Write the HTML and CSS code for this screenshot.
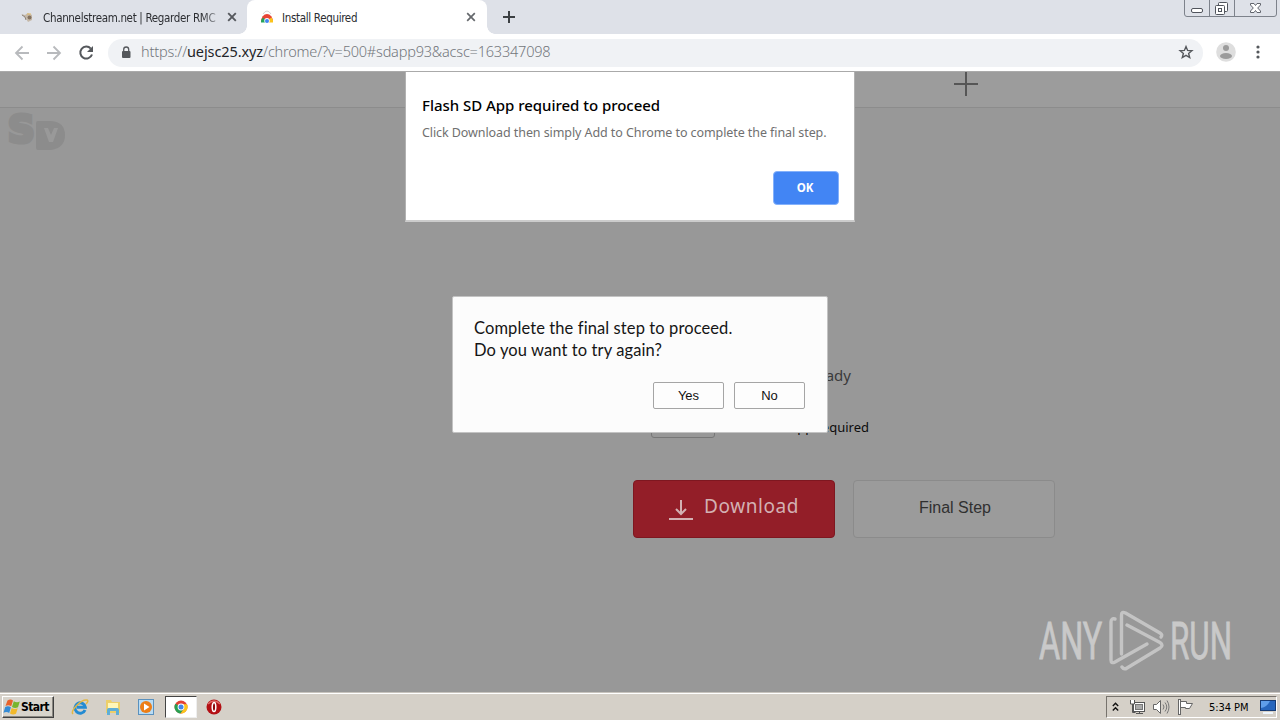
FILE: index.html
```html
<!DOCTYPE html>
<html lang="en">
<head>
<meta charset="utf-8">
<title>Install Required</title>
<link rel="stylesheet" href="styles.css">
</head>
<body>
<div class="desktop">
  <header class="tabstrip">
    <div class="tab tab-idle">
      <svg class="favicon" width="16" height="16" viewBox="0 0 16 16"><path d="M2 5l4 1 3-2 4 2v5l-4 2-3-5z" fill="#c5b8a8"/><path d="M3 6l3 2 1 3" stroke="#8b8178" fill="none"/><circle cx="10.500" cy="8.500" r="2" fill="#83715f"/><path d="M8 5h4" stroke="#e2bc68"/></svg>
      <span class="tab-title fade">Channelstream.net | Regarder RMC</span>
      <svg class="close" width="10" height="10" viewBox="0 0 10 10"><path d="M1.200 1.200l7.600 7.600M8.800 1.200L1.200 8.800" stroke="#55585d" stroke-width="1.900"/></svg>
    </div>
    <div class="tab tab-active">
      <svg class="favicon" width="14" height="14" viewBox="0 0 14 14"><path d="M3 4q4-6 8 0" fill="none" stroke="#d5d5d5"/><path d="M1 12a6 8 0 0 1 12 0z" fill="#e94435"/><path d="M1 12.500a6 6 0 0 1 2-5l3 3v2z" fill="#22a55a"/><path d="M13 12.500a6 6 0 0 0-1.500-5L8 10v2.500z" fill="#fbc31b"/><circle cx="7" cy="10.800" r="2.700" fill="#fff"/><circle cx="7" cy="10.900" r="2" fill="#4285f4"/></svg>
      <span class="tab-title">Install Required</span>
      <svg class="close" width="10" height="10" viewBox="0 0 10 10"><path d="M1.200 1.200l7.600 7.600M8.800 1.200L1.200 8.800" stroke="#65686c" stroke-width="1.700"/></svg>
    </div>
    <svg class="newtab" width="14" height="14" viewBox="0 0 14 14"><path d="M7 1v12M1 7h12" stroke="#3c4043" stroke-width="2"/></svg>
    <svg class="winctl" width="94" height="18" viewBox="0 0 94 18"><path d="M1.500 0v14q0 2.500 2.500 2.500h87q2.500 0 2.500-2.500V0M26.500 0v16M51.500 0v16" fill="none" stroke="#7d828b"/><g fill="#fff" stroke="#50545c"><rect x="8.500" y="8.500" width="11" height="4" rx="1.500"/><rect x="35.500" y="2.500" width="9" height="9" rx="1"/><rect x="32.500" y="5.500" width="9" height="9" rx="1"/><rect x="35.500" y="8.500" width="3" height="3"/></g><path d="M67.500 3.500h3.500l1.500 2 1.500-2h3.500v1.500L74.700 8l2.800 3v1.500H74l-1.500-2-1.500 2h-3.500V11l2.800-3-2.800-3z" fill="#fff" stroke="#60646c"/></svg>
  </header>

  <div class="toolbar">
    <svg class="nav" width="96" height="20" viewBox="0 0 96 20" fill="none"><g stroke="#b8babd" stroke-width="1.800"><path d="M15 10H2.500M8.500 3.500L2 10l6.500 6.500"/><path d="M33 10h12.500M39.500 3.500L46 10l-6.500 6.500"/></g><path d="M76.800 5.600A6 6 0 1 0 78 11.500" stroke="#55585c" stroke-width="2"/><path d="M79 3v6h-6z" fill="#55585c"/></svg>
    <div class="omnibox">
      <svg width="10" height="13" viewBox="0 0 10 13"><rect x="1" y="5" width="8.500" height="7" rx="1" fill="#55585c"/><path d="M2.700 5.500V3.500a2.500 2.500 0 0 1 5 0v2" fill="none" stroke="#55585c" stroke-width="1.300"/></svg>
      <span class="url">https://<b>uejsc25.xyz</b>/chrome/?v=500#sdapp93&amp;acsc=163347098</span>
      <svg class="star" width="16" height="16" viewBox="0 0 16 16"><path d="M8 2.500l1.600 3.900 4.300.3-3.300 2.700 1.100 4.200L8 11.300l-3.700 2.300 1.100-4.200-3.300-2.700 4.300-.3z" fill="none" stroke="#55585c" stroke-width="1.400"/></svg>
    </div>
    <svg class="avatar" width="20" height="20" viewBox="0 0 20 20"><circle cx="10" cy="10" r="9.800" fill="#dedede"/><circle cx="10" cy="6" r="3" fill="#9b9b9b"/><ellipse cx="10" cy="14" rx="6" ry="3" fill="#9b9b9b"/></svg>
    <svg class="dots" width="4" height="14" viewBox="0 0 4 14"><g fill="#55585c"><circle cx="2" cy="2" r="1.600"/><circle cx="2" cy="7" r="1.600"/><circle cx="2" cy="12" r="1.600"/></g></svg>
  </div>

  <main class="page">
    <div class="page-head"><svg width="24" height="25" viewBox="0 0 24 25"><path d="M12 0v24M0 12h24" stroke="#565656" stroke-width="2"/></svg></div>
    <div class="sd-logo"><span class="s">S</span><svg class="d" width="29" height="29" viewBox="0 0 29 29"><path d="M2 0h13q14 1 14 14T15 29H2q-2 0-2-2V2q0-2 2-2z" fill="#8c8c8c"/><path d="M8 7h4l3 7 3-7h4l-5 14h-4z" fill="#999"/></svg></div>
    <div class="content">
      <p class="ready">Your download is ready</p>
      <div class="req-row"><span class="badge"></span><span class="req">SD App required</span></div>
      <div class="actions">
        <div class="btn download"><svg width="24" height="22" viewBox="0 0 24 22"><path d="M12 1v14M7 10l5 5 5-5M0 20h24" fill="none" stroke="#d3b1b3" stroke-width="2"/></svg><span>Download</span></div>
        <div class="btn final"><span>Final Step</span></div>
      </div>
    </div>

    <section class="dialog alert">
      <h1>Flash SD App required to proceed</h1>
      <p>Click Download then simply Add to Chrome to complete the final step.</p>
      <button class="ok">OK</button>
    </section>

    <section class="dialog confirm">
      <p class="l1">Complete the final step to proceed.</p>
      <p class="l2">Do you want to try again?</p>
      <div class="choices"><button>Yes</button><button>No</button></div>
    </section>

    <div class="watermark">
      <svg width="194" height="62" viewBox="0 0 194 62">
        <g fill="#c9c9c9" stroke="#c9c9c9" stroke-width=".8" font-family="Roboto, sans-serif" font-size="51"><text transform="translate(0 49) scale(.62 1)" textLength="102" lengthAdjust="spacingAndGlyphs">ANY</text><text transform="translate(131 49) scale(.62 1)" textLength="100" lengthAdjust="spacingAndGlyphs">RUN</text></g>
        <g fill="none" stroke="#c4c4c4" stroke-width="3.400" stroke-linecap="round" stroke-linejoin="round"><path d="M76 9q-4-1-4 3v38q0 4 4 2L108 34"/><path d="M82.500 44V5q0-4 4-2L121 23q3 2 1 4"/><path d="M83 57q2 3 5 1L121 38q4-3 0-5.500L88 15"/></g>
      </svg>
    </div>
  </main>

  <footer class="taskbar">
    <div class="start"><svg width="18" height="18" viewBox="0 0 18 18"><path d="M4.500 2.500q3-2 5.500 0L8.200 8.300Q5.500 6.300 2.500 8z" fill="#e8622b"/><path d="M10.800 3.200q3 2 6 .3l-1.800 5.700q-3 1.700-6-.3z" fill="#78b52f"/><path d="M2.200 9q3-1.700 5.700.3L6.200 15q-2.500-2-5.700-.3z" fill="#358bd5"/><path d="M8.700 9.900q3 2 6 .3L13 15.800q-3 1.700-6-.3z" fill="#f2b92b"/></svg><span>Start</span></div>
    <div class="launch">
      <svg width="18" height="18" viewBox="0 0 18 18"><path d="M14 12A5.200 5.200 0 1 1 14.300 9.300H6" fill="none" stroke="#248bd2" stroke-width="3"/><path d="M2 16C-1 13 10 1 16 2q2 1-1 4" fill="none" stroke="#e3b743" stroke-width="1.500"/></svg>
      <svg width="18" height="18" viewBox="0 0 18 18"><path d="M2 2h5l1 2h8v11H2z" fill="#edcf69"/><path d="M4 5h10v5H4z" fill="#fff6b8"/><path d="M3 17v-5q0-2 2-2h8q2 0 2 2v5h-3v-4H6v4z" fill="#5faed6"/></svg>
      <svg width="18" height="18" viewBox="0 0 18 18"><rect x="1.500" y="1.500" width="15" height="15" fill="#b9dcf4" stroke="#5a91be"/><circle cx="9" cy="9" r="6" fill="#ed7e16"/><path d="M7 5.500l5.500 3.500L7 12.500z" fill="#fff"/></svg>
      <div class="running"><svg width="16" height="16" viewBox="0 0 16 16"><circle cx="8" cy="8" r="6.500" fill="#e34133"/><path d="M2.400 4.700A6.500 6.500 0 0 0 7.500 14.500L11 9.500 8 8z" fill="#27a052"/><path d="M14 5.300H8l3 4.500-3.500 4.700A6.500 6.500 0 0 0 14 5.300z" fill="#fbc51c"/><circle cx="8" cy="8" r="3.400" fill="#fff"/><circle cx="8" cy="8" r="2.500" fill="#4285e8"/></svg></div>
      <svg class="opera" width="16" height="16" viewBox="0 0 16 16"><circle cx="8" cy="8" r="7.500" fill="#b30f14"/><path d="M2 5q6-6 12 0" stroke="#df6966" stroke-width="1.500" fill="none"/><ellipse cx="8" cy="8" rx="1.800" ry="4.500" fill="#8d080c" stroke="#fff" stroke-width="1.500"/></svg>
    </div>
    <div class="tray">
      <svg class="chev" width="7" height="10" viewBox="0 0 7 10"><path d="M.8 4L3.500 1.300 6.200 4M.8 8.500l2.700-2.700 2.700 2.700" fill="none" stroke="#111" stroke-width="1.400"/></svg>
      <svg class="net" width="16" height="16" viewBox="0 0 16 16"><rect x="4.500" y="3.500" width="11" height="9" fill="#fff" stroke="#555"/><rect x="6.500" y="5.500" width="7" height="5" fill="#aaa" stroke="#777"/><path d="M7 14.500h7M10.500 12.500v2M3.500 5v8.500h3" fill="none" stroke="#555"/><path d="M1.500 1v4h4V1" fill="#fff" stroke="#555"/></svg>
      <svg class="snd" width="17" height="16" viewBox="0 0 17 16"><path d="M.5 5.500h3l4-4v13l-4-4h-3z" fill="#fff" stroke="#666"/><path d="M10 5.500q2 2.500 0 5M12 3.500q3.500 4.500 0 9M14 1.500q4 6.500 0 13" fill="none" stroke="#777"/></svg>
      <svg class="flag" width="17" height="16" viewBox="0 0 17 16"><path d="M3.500 2.500h6v2h6l-3 5h-4v-1h-5z" fill="#fff" stroke="#666"/><rect x="1.500" y=".5" width="2" height="15" fill="#fff" stroke="#666"/></svg>
      <span class="clock">5:34 PM</span>
      <svg class="show" width="16" height="14" viewBox="0 0 16 14"><rect x=".5" y=".5" width="15" height="10" fill="#2766bd" stroke="#173b73"/><path d="M1 8q6-1 9-7H1z" fill="#5f9eea"/><path d="M3 13h10" stroke="#edf5fc" stroke-width="2"/></svg>
    </div>
  </footer>
</div>
</body>
</html>
```
FILE: styles.css
```css
* { box-sizing: border-box; }
body { margin: 0; font-family: "Noto Sans", sans-serif; }
p, h1 { margin: 0; }
svg { display: block; flex: none; }
span, p, h1 { white-space: nowrap; }
.desktop { width: 1280px; height: 720px; overflow: hidden; display: flex; flex-direction: column; background: #989898; }

.tabstrip { flex: none; height: 34px; background: #dee1e8; display: flex; align-items: flex-start; }
.tab { height: 34px; display: flex; align-items: center; }
.tab-idle { width: 247px; padding-left: 19px; border-radius: 0 0 8px 0; }
.tab-active { width: 240px; padding-left: 13px; background: #fff; border-radius: 8px 8px 0 0; position: relative; }
.tab-active::before, .tab-active::after { content: ""; position: absolute; bottom: 0; width: 8px; height: 8px; }
.tab-active::before { left: -8px; background: radial-gradient(circle at 0 0, transparent 7.500px, #fff 8px); }
.tab-active::after { right: -8px; background: radial-gradient(circle at 100% 0, transparent 7.500px, #fff 8px); }
.tab-title { flex: none; width: 173px; margin-left: 8px; padding-top: 1px; font: 11.500px/16px "DejaVu Sans Condensed", "DejaVu Sans", sans-serif; letter-spacing: -.33px; color: #2b2d31; }
.fade { -webkit-mask-image: linear-gradient(90deg, #000 92%, rgba(0,0,0,.4)); mask-image: linear-gradient(90deg, #000 92%, rgba(0,0,0,.4)); }
.close { margin-left: 11px; }
.newtab { margin: 10px 0 0 15px; }
.winctl { margin-left: auto; margin-right: 3px; }

.toolbar { flex: none; height: 37px; background: #fff; display: flex; align-items: center; padding-left: 14px; }
.omnibox { width: 1095px; height: 28px; margin-left: -2px; border-radius: 14px; background: #f0f2f5; display: flex; align-items: center; padding: 0 9px 0 13px; }
.url { margin-left: 10px; font-size: 14.500px; line-height: 20px; color: #73777c; font-weight: 300; letter-spacing: -.2px; padding-bottom: 3px; }
.url b { font-weight: 400; color: #222428; letter-spacing: -.1px; }
.star { margin-left: auto; margin-top: -1px; }
.avatar { margin-left: 13px; margin-top: -2px; }
.dots { margin-left: 20px; margin-top: -1px; }

.page { position: relative; flex: none; height: 621px; background: #989898; border-top: 1px solid #aaa; overflow: hidden; }
.page-head { height: 36px; background: #9c9c9c; border-bottom: 1px solid #8c8c8c; padding-left: 954px; }
.sd-logo { height: 44px; padding: 3px 0 0 8px; display: flex; color: #8c8c8c; }
.sd-logo .s { width: 28px; -webkit-text-stroke: 4px #8c8c8c; font: bold 37px/38px "DejaVu Sans", sans-serif; letter-spacing: -1px; }
.sd-logo .d { margin-top: 10px; }
.content { padding: 213px 0 0 633px; }
.ready { width: 218px; text-align: right; font-size: 15px; line-height: 20px; color: #3b3b3b; }
.req-row { display: flex; padding: 27px 0 0 18px; height: 71px; }
.badge { width: 64px; height: 26px; border: 1px solid #777; border-radius: 3px; }
.req { width: 154px; text-align: right; font-size: 13px; line-height: 18px; padding-top: 6px; color: #0c0c0c; }
.actions { display: flex; gap: 18px; margin-top: 24px; }
.btn { width: 202px; height: 58px; border-radius: 4px; display: flex; align-items: center; justify-content: center; }
.download { gap: 11px; background: #931e28; border: 1px solid #7e1720; color: #d3b1b3; font: 19px "Noto Sans", sans-serif; letter-spacing: .55px; padding: 0 0 7px 0; }
.download svg { margin-top: 8px; }
.final { background: #9b9b9b; border: 1px solid #8b8b8b; color: #303030; font: 16px "Liberation Sans", sans-serif; padding: 0 0 2px 2px; }

.dialog { position: absolute; }
.alert { left: 405px; top: -1px; width: 450px; height: 151px; background: #fff; border: 1px solid #b2b2b2; border-bottom: 2px solid #ccc; padding: 22px 15px 0 16px; }
.alert h1 { font-size: 15px; font-weight: 500; line-height: 22px; color: #000; letter-spacing: -.03px; }
.alert p { font-size: 12.500px; line-height: 18px; color: #707070; margin-top: 8px; letter-spacing: -.08px; }
.ok { display: block; width: 66px; height: 34px; margin: 29px 0 0 auto; border: 1px solid #84b1fb; border-radius: 4px; background: #4285f4; color: #fff; font: bold 11.500px "Noto Sans", sans-serif; padding: 0 2px 2px 0; }
.confirm { left: 452px; top: 224px; width: 376px; height: 137px; background: #fcfcfc; border: 1px solid #c3c3c3; border-radius: 2px; padding: 20px 22px 0 21px; font-family: Lato, sans-serif; color: #151515; font-size: 16.500px; line-height: 22px; letter-spacing: .1px; }
.choices { display: flex; justify-content: flex-end; gap: 10px; margin-top: 21px; }
.choices button { width: 71px; height: 27px; border: 1px solid #a5a5a5; border-radius: 2px; background: #fdfdfd; font: 13px "Liberation Sans", sans-serif; color: #111; padding: 0; }
.watermark { position: absolute; left: 1039px; top: 538px; }

.taskbar { flex: none; height: 28px; background: #d5d0c8; border-top: 1px solid #c8c4be; box-shadow: inset 0 1px #fff; display: flex; align-items: flex-start; padding: 3px 3px 0 2px; }
.start { width: 52px; height: 22px; background: #d8d4cc; border: 1px solid; border-color: #fff #404040 #404040 #fff; box-shadow: inset -1px -1px #8a8781; display: flex; align-items: center; font: bold 12px "DejaVu Sans Condensed", "DejaVu Sans", sans-serif; letter-spacing: -.6px; }
.launch { display: flex; align-items: center; height: 22px; margin-left: 17px; }
.launch > svg + svg { margin-left: 15px; }
.running { width: 32px; height: 22px; margin-left: 10px; background: #fff; border: 1px solid; border-color: #444 #eee #eee #444; display: flex; align-items: center; justify-content: center; }
.launch .opera { margin-left: 9px; }
.tray { margin-left: auto; width: 171px; height: 22px; border: 1px solid; border-color: #77736d #fff #fff #77736d; display: flex; align-items: center; padding-left: 5px; }
.net { margin-left: 10px; }
.snd { margin-left: 8px; }
.flag { margin-left: 7px; }
.clock { width: 41px; margin-left: 15px; font: 11px "DejaVu Sans Condensed", "DejaVu Sans", sans-serif; letter-spacing: -.05px; }
.show { margin-left: 10px; }
```
